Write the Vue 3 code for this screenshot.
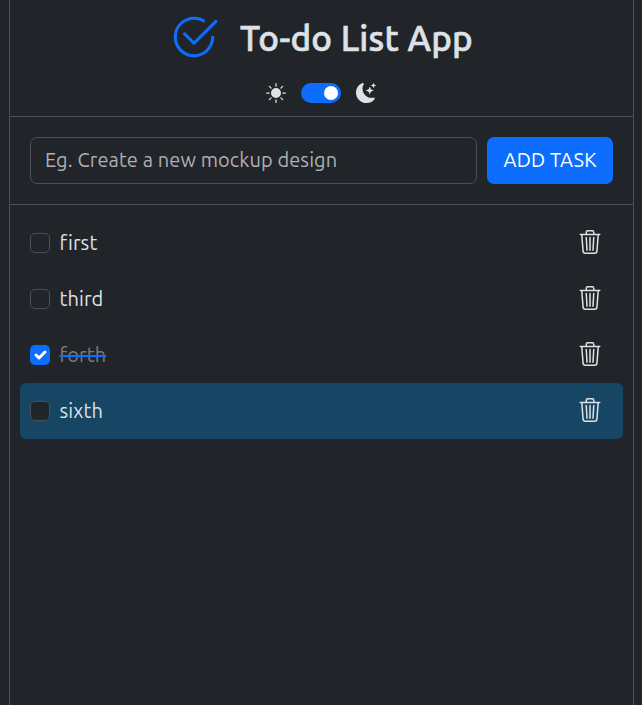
<script setup>
import { ref } from 'vue'

const dark = ref(true)
const draft = ref('')
const tasks = ref([
  { id: 1, name: 'first', done: false, active: false },
  { id: 2, name: 'third', done: false, active: false },
  { id: 3, name: 'forth', done: true, active: false },
  { id: 4, name: 'sixth', done: false, active: true },
])

function addTask() {
  const name = draft.value.trim()
  if (!name) return
  tasks.value.push({ id: Date.now(), name, done: false, active: false })
  draft.value = ''
}
function removeTask(id) {
  tasks.value = tasks.value.filter((t) => t.id !== id)
}
</script>

<template>
  <main class="app">
    <header class="header">
      <div class="brand">
        <svg class="logo" viewBox="0 0 16 16" fill="currentColor">
          <path d="M2.5 8a5.5 5.5 0 0 1 8.25-4.764.5.5 0 0 0 .5-.866A6.5 6.5 0 1 0 14.5 8a.5.5 0 0 0-1 0 5.5 5.5 0 1 1-11 0z" />
          <path d="M15.354 3.354a.5.5 0 0 0-.708-.708L8 9.293 5.354 6.646a.5.5 0 1 0-.708.708l3 3a.5.5 0 0 0 .708 0l7-7z" />
        </svg>
        <h1 class="title">To-do List App</h1>
      </div>
      <div class="theme">
        <svg class="theme-icon" viewBox="0 0 16 16" fill="currentColor">
          <path d="M8 12a4 4 0 1 0 0-8 4 4 0 0 0 0 8zM8 0a.5.5 0 0 1 .5.5v2a.5.5 0 0 1-1 0v-2A.5.5 0 0 1 8 0zm0 13a.5.5 0 0 1 .5.5v2a.5.5 0 0 1-1 0v-2A.5.5 0 0 1 8 13zm8-5a.5.5 0 0 1-.5.5h-2a.5.5 0 0 1 0-1h2a.5.5 0 0 1 .5.5zM3 8a.5.5 0 0 1-.5.5h-2a.5.5 0 0 1 0-1h2A.5.5 0 0 1 3 8zm10.657-5.657a.5.5 0 0 1 0 .707l-1.414 1.415a.5.5 0 1 1-.707-.708l1.414-1.414a.5.5 0 0 1 .707 0zm-9.193 9.193a.5.5 0 0 1 0 .707L3.05 13.657a.5.5 0 0 1-.707-.707l1.414-1.414a.5.5 0 0 1 .707 0zm9.193 2.121a.5.5 0 0 1-.707 0l-1.414-1.414a.5.5 0 0 1 .707-.707l1.414 1.414a.5.5 0 0 1 0 .707zM4.464 4.465a.5.5 0 0 1-.707 0L2.343 3.05a.5.5 0 1 1 .707-.707l1.414 1.414a.5.5 0 0 1 0 .708z" />
        </svg>
        <button class="switch" :class="{ on: dark }" @click="dark = !dark"><span class="knob"></span></button>
        <svg class="theme-icon" viewBox="0 0 16 16" fill="currentColor">
          <path d="M6 .278a.768.768 0 0 1 .08.858 7.208 7.208 0 0 0-.878 3.46c0 4.021 3.278 7.277 7.318 7.277.527 0 1.04-.055 1.533-.16a.787.787 0 0 1 .81.316.733.733 0 0 1-.031.893A8.349 8.349 0 0 1 8.344 16C3.734 16 0 12.286 0 7.71 0 4.266 2.114 1.312 5.124.06A.752.752 0 0 1 6 .278z" />
          <path d="M10.794 3.148a.217.217 0 0 1 .412 0l.387 1.162c.173.518.579.924 1.097 1.097l1.162.387a.217.217 0 0 1 0 .412l-1.162.387a1.734 1.734 0 0 0-1.097 1.097l-.387 1.162a.217.217 0 0 1-.412 0l-.387-1.162A1.734 1.734 0 0 0 9.31 6.593l-1.162-.387a.217.217 0 0 1 0-.412l1.162-.387a1.734 1.734 0 0 0 1.097-1.097l.387-1.162zM13.863.099a.145.145 0 0 1 .274 0l.258.774c.115.346.386.617.732.732l.774.258a.145.145 0 0 1 0 .274l-.774.258a1.156 1.156 0 0 0-.732.732l-.258.774a.145.145 0 0 1-.274 0l-.258-.774a1.156 1.156 0 0 0-.732-.732l-.774-.258a.145.145 0 0 1 0-.274l.774-.258c.346-.115.617-.386.732-.732L13.863.1z" />
        </svg>
      </div>
    </header>

    <form class="entry" @submit.prevent="addTask">
      <input v-model="draft" class="field" placeholder="Eg. Create a new mockup design" />
      <button class="add" type="submit">ADD TASK</button>
    </form>

    <ul class="list">
      <li v-for="task in tasks" :key="task.id" class="task" :class="{ active: task.active, done: task.done }">
        <button class="check" @click="task.done = !task.done">
          <svg v-if="task.done" class="tick" viewBox="0 0 20 20">
            <path d="m6 10 3 3 6-6" />
          </svg>
        </button>
        <span class="name">{{ task.name }}</span>
        <button class="remove" @click="removeTask(task.id)">
          <svg class="trash" viewBox="0 0 16 16" fill="currentColor">
            <path d="M6.5 1h3a.5.5 0 0 1 .5.5v1H6v-1a.5.5 0 0 1 .5-.5ZM11 2.5v-1A1.5 1.5 0 0 0 9.5 0h-3A1.5 1.5 0 0 0 5 1.5v1H2.506a.58.58 0 0 0-.01 0H1.5a.5.5 0 0 0 0 1h.538l.853 10.66A2 2 0 0 0 4.885 16h6.23a2 2 0 0 0 1.994-1.84l.853-10.66h.538a.5.5 0 0 0 0-1h-.995a.59.59 0 0 0-.01 0H11Zm1.958 1-.846 10.58a1 1 0 0 1-.997.92h-6.23a1 1 0 0 1-.997-.92L3.042 3.5h9.916Zm-7.487 1a.5.5 0 0 1 .528.47l.5 8.5a.5.5 0 0 1-.998.06L5 5.03a.5.5 0 0 1 .47-.53Zm5.058 0a.5.5 0 0 1 .47.53l-.5 8.5a.5.5 0 1 1-.998-.06l.5-8.5a.5.5 0 0 1 .528-.47ZM8 4.5a.5.5 0 0 1 .5.5v8.5a.5.5 0 0 1-1 0V5a.5.5 0 0 1 .5-.5Z" />
          </svg>
        </button>
      </li>
    </ul>
  </main>
</template>

<style>
body {
  background: #212529;
}
</style>

<style scoped>
.app {
  box-sizing: border-box;
  width: 625px;
  height: 705px;
  margin-left: 9px;
  border: solid #495057;
  border-width: 0 1px;
  color: #dee2e6;
  font-family: Ubuntu, "Noto Sans", sans-serif;
  font-size: 20px;
  letter-spacing: 0.1px;
}
.header {
  box-sizing: border-box;
  height: 117px;
  padding-top: 12px;
  border-bottom: 1px solid #495057;
}
.brand {
  display: flex;
  align-items: center;
  height: 50px;
  padding-left: 159px;
  gap: 21px;
}
.logo {
  flex: none;
  width: 50px;
  height: 50px;
  color: #0d6efd;
}
.title {
  margin: 0;
  padding-top: 2px;
  font-size: 35px;
  font-weight: 500;
  line-height: 50px;
  white-space: nowrap;
  -webkit-text-stroke: 0.6px currentColor;
  letter-spacing: 0.2px;
}
.theme {
  display: flex;
  align-items: center;
  gap: 15px;
  height: 20px;
  margin-top: 21px;
  padding-left: 256px;
}
.theme-icon {
  width: 20px;
  height: 20px;
}
.switch {
  display: flex;
  align-items: center;
  width: 40px;
  height: 20px;
  padding: 0 3px;
  border: 0;
  border-radius: 10px;
  background: #495057;
}
.switch.on {
  justify-content: flex-end;
  background: #0d6efd;
}
.knob {
  width: 14px;
  height: 14px;
  border-radius: 50%;
  background: #fff;
}
.entry {
  box-sizing: border-box;
  display: flex;
  gap: 10px;
  height: 88px;
  padding: 20px;
  border-bottom: 1px solid #495057;
}
.field {
  box-sizing: border-box;
  width: 447px;
  height: 47px;
  padding: 0 14px 2px;
  border: 1px solid #495057;
  border-radius: 7px;
  outline: 0;
  background: #212529;
  color: #dee2e6;
  font: inherit;
  letter-spacing: inherit;
}
.field::placeholder {
  color: #adb0b4;
  opacity: 1;
}
.add {
  width: 126px;
  height: 47px;
  padding: 0 0 2px;
  border: 0;
  border-radius: 7px;
  background: #0d6efd;
  color: #fff;
  font: inherit;
  letter-spacing: 0.15px;
  white-space: nowrap;
}
.list {
  margin: 0;
  padding: 10px;
  list-style: none;
}
.task {
  box-sizing: border-box;
  display: flex;
  align-items: center;
  height: 56px;
  padding: 0 21px 0 10px;
  border-radius: 6px;
}
.task.active {
  background: #174564;
}
.check {
  box-sizing: border-box;
  flex: none;
  width: 20px;
  height: 20px;
  padding: 0;
  border: 1px solid #495057;
  border-radius: 5px;
  background: #212529;
}
.done .check {
  border: 0;
  background: #0d6efd;
}
.tick {
  display: block;
  width: 20px;
  height: 20px;
  fill: none;
  stroke: #fff;
  stroke-width: 3;
  stroke-linecap: round;
  stroke-linejoin: round;
}
.name {
  margin-left: 9.5px;
  line-height: 28px;
}
.done .name {
  color: #797c7f;
  text-decoration: line-through #0d6efd 2px;
}
.remove {
  display: flex;
  margin-left: auto;
  padding: 0 0 2px;
  border: 0;
  background: none;
  color: #dee2e6;
}
.trash {
  width: 24px;
  height: 24px;
}
</style>
